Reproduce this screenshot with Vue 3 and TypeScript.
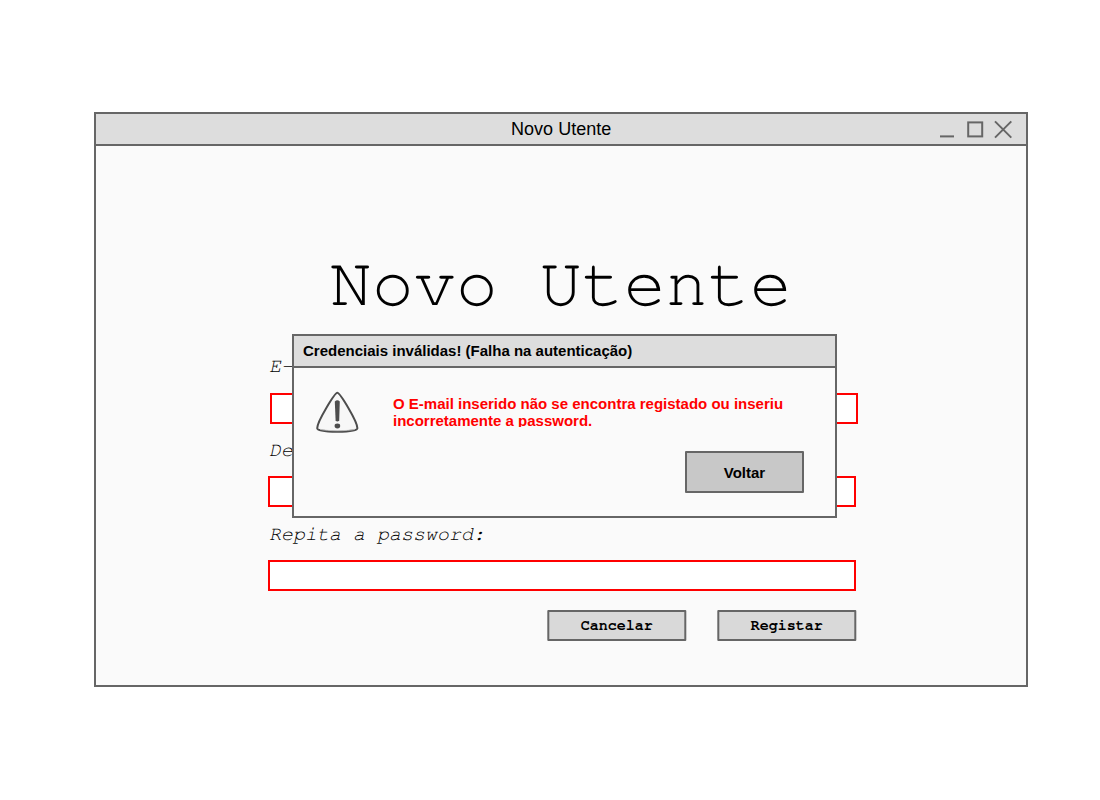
<script setup lang="ts">
interface Field {
  label: string
  shifted: boolean
}

const fields: Field[] = [
  { label: 'E-mail:', shifted: true },
  { label: 'Defina uma password:', shifted: false },
  { label: 'Repita a password:', shifted: false },
]
const actions: string[] = ['Cancelar', 'Registar']
</script>

<template>
  <main class="stage">
    <section class="window">
      <header class="titlebar">
        <span class="caption">Novo Utente</span>
        <svg class="controls" width="76" height="20" viewBox="0 0 76 20" fill="none" stroke="#666" stroke-width="2">
          <path d="M2 17.4H16" />
          <rect x="30.2" y="3.4" width="14" height="14" />
          <path d="M57 2.4L73.3 18.6M73.3 2.4L57 18.6" />
        </svg>
      </header>
      <div class="body">
        <h1>Novo Utente</h1>
        <form class="form" @submit.prevent>
          <div v-for="f in fields" :key="f.label" class="field" :class="{ shifted: f.shifted }">
            <label>{{ f.label }}</label>
            <div class="input"></div>
          </div>
          <div class="actions">
            <button v-for="a in actions" :key="a" type="button">{{ a }}</button>
          </div>
        </form>
      </div>
    </section>

    <section class="dialog" role="alertdialog">
      <header class="dialog-title">Credenciais inválidas! (Falha na autenticação)</header>
      <div class="dialog-body">
        <svg class="warning" width="44" height="44" viewBox="0 0 44 44">
          <path d="M22.3 2.8C25 2.8 42.4 31.5 42.4 38.2C42.4 42.8 2.2 42.8 2.2 38.2C2.2 31.5 19.8 2.8 22.3 2.8Z" fill="#f7f7f7" stroke="#4d4d4d" stroke-width="2" />
          <path d="M5 39.3C12 41.2 33 41.2 40 39.3" fill="none" stroke="#c4c4c4" stroke-width="0.8" />
          <path d="M19.8 11.5Q22.3 8.8 24.8 11.5L24.2 30.3Q22.3 32.8 20.6 30.3Z" fill="#4d4d4d" />
          <ellipse cx="22.4" cy="36" rx="2.8" ry="2.4" fill="#4d4d4d" />
        </svg>
        <p>O E-mail inserido não se encontra registado ou inseriu incorretamente a password.</p>
      </div>
      <button class="back" type="button">Voltar</button>
    </section>
  </main>
</template>

<style>
body {
  background: #fff;
}
</style>

<style scoped>
* {
  box-sizing: border-box;
}
.stage {
  position: relative;
  width: 1100px;
  height: 800px;
  padding: 112px 0 0 94px;
  overflow: hidden;
  color: #000;
  font-family: "Liberation Sans", Arial, sans-serif;
}
.window {
  width: 934.3px;
  height: 575px;
  border: 2px solid #666;
  background: #fafafa;
}
.titlebar {
  display: grid;
  grid-template-columns: 76px 1fr 76px;
  align-items: center;
  height: 32px;
  padding: 0 12px;
  border-bottom: 2px solid #666;
  background: #ddd;
}
.caption {
  grid-column: 2;
  text-align: center;
  font-size: 18px;
  line-height: 30px;
}
.body {
  padding-top: 98px;
  font-family: FreeMono, "Liberation Mono", monospace;
}
h1,
.field label {
  text-rendering: geometricPrecision;
}
h1 {
  margin: 0;
  height: 100px;
  padding-right: 1px;
  text-align: center;
  font-size: 70px;
  font-weight: 400;
  line-height: 80px;
  transform: translateY(0.3px) rotate(0.001deg);
}
.form {
  width: 588px;
  margin-left: 172px;
}
.field {
  height: 84px;
  padding-top: 10px;
}
.field.shifted {
  height: 83px;
  padding-top: 9px;
  transform: translateX(2px);
}
.field label {
  display: block;
  height: 39px;
  padding-left: 1px;
  font-size: 20px;
  font-style: italic;
  line-height: 24px;
  transform: translateY(1px) rotate(0.001deg);
}
.field.shifted label {
  height: 40px;
  margin-left: -2px;
}
.input {
  height: 31px;
  border: 2px solid #f00;
  background: #fff;
}
.actions {
  display: flex;
  justify-content: flex-end;
  gap: 31px;
  padding-top: 15px;
}
.actions button {
  width: 139px;
  height: 31px;
  padding: 0;
  border: 2px solid #666;
  border-radius: 1px;
  background: #d9d9d9;
  color: #000;
  font: bold 15px/27px FreeMono, "Liberation Mono", monospace;
  transform: translate(0.3px, 0.1px) rotate(0.001deg);
}
.dialog {
  position: absolute;
  top: 334px;
  left: 292px;
  display: flex;
  flex-direction: column;
  width: 545px;
  height: 184px;
  border: 2px solid #666;
  background: #fafafa;
  font-size: 15px;
  font-weight: 700;
}
.dialog-title {
  height: 32px;
  padding-left: 9px;
  border-bottom: 2px solid #666;
  background: #ddd;
  line-height: 30px;
}
.dialog-body {
  display: flex;
  align-items: flex-start;
  gap: 34px;
  height: 83px;
  padding: 22px 0 0 21px;
}
.warning {
  flex: none;
}
.dialog-body p {
  width: 410px;
  height: 32px;
  margin: 5px 0 0;
  overflow: hidden;
  color: #f00;
  line-height: 17px;
}
.back {
  align-self: flex-end;
  width: 119px;
  height: 42px;
  margin-right: 31px;
  padding: 2px 0 0;
  border: 2px solid #666;
  border-radius: 1px;
  background: #c8c8c8;
  color: #000;
  font: bold 15px/36px "Liberation Sans", Arial, sans-serif;
}
</style>
